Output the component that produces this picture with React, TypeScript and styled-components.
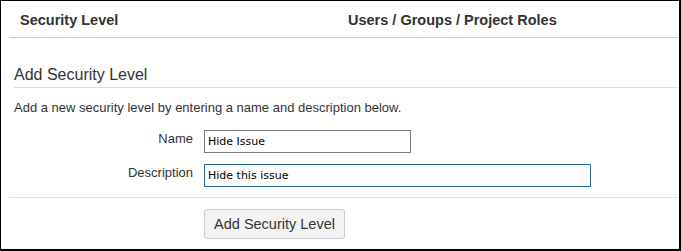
import React from "react";
import styled, { createGlobalStyle } from "styled-components";

const Global = createGlobalStyle`
  html, body { margin: 0; padding: 0; background: #fff; }
  body { font-family: "Liberation Sans", Arial, sans-serif; color: #333; }
  * { box-sizing: border-box; }
`;

const Frame = styled.div`
  width: 681px;
  height: 251px;
  border-left: 1px solid #000;
  border-top: 1px solid #000;
  border-right: 2px solid #000;
  border-bottom: 2px solid #000;
  background: #fff;
  display: flex;
  flex-direction: column;
  overflow: hidden;
`;

const Header = styled.div`
  margin-left: 8px;
  height: 37px;
  border-bottom: 1px solid #cccccc;
  display: grid;
  grid-template-columns: 339px 1fr;
  align-items: center;
`;

const HeaderCell = styled.div<{ $pad: number }>`
  padding-left: ${(p) => p.$pad}px;
  font-size: 14.5px;
  font-weight: bold;
  color: #333;
  padding-top: 2px;
`;

const Heading = styled.h2`
  margin: 0 0 0 13px;
  padding: 27px 0 2px 0;
  font-size: 16px;
  line-height: 20px;
  font-weight: normal;
  color: #333;
  border-bottom: 1px solid #dddddd;
`;

const Intro = styled.p`
  margin: 12px 0 0 13px;
  font-size: 13px;
  line-height: 16px;
  color: #333;
`;

const Form = styled.div`
  margin-top: 14px;
  display: flex;
  flex-direction: column;
  gap: 11px;
`;

const Row = styled.div`
  display: grid;
  grid-template-columns: 192px auto;
  column-gap: 11px;
  align-items: start;
`;

const Label = styled.label`
  text-align: right;
  font-size: 13px;
  line-height: 18px;
  color: #333;
`;

const Input = styled.input<{ $w: number; $focus?: boolean }>`
  width: ${(p) => p.$w}px;
  height: 23px;
  margin: 0;
  padding: 0 3px;
  font-family: "DejaVu Sans", Tahoma, sans-serif;
  font-size: 11px;
  color: #000;
  background: #fff;
  border: 1px solid ${(p) => (p.$focus ? "#2b6c9e" : "#7a7a7a")};
  outline: none;
`;

const Divider = styled.div`
  margin: 10px 0 0 8px;
  height: 1px;
  background: #dddddd;
`;

const Button = styled.button`
  margin: 11px 0 0 203px;
  width: 141px;
  height: 30px;
  padding: 0;
  font-family: "Liberation Sans", Arial, sans-serif;
  font-size: 14.5px;
  color: #333;
  background: #f4f4f4;
  border: 1px solid #cccccc;
  border-radius: 3px;
  align-self: flex-start;
`;

export default function App() {
  return (
    <>
      <Global />
      <Frame>
        <Header>
          <HeaderCell $pad={11}>Security Level</HeaderCell>
          <HeaderCell $pad={0}>Users / Groups / Project Roles</HeaderCell>
        </Header>
        <Heading>Add Security Level</Heading>
        <Intro>Add a new security level by entering a name and description below.</Intro>
        <Form>
          <Row>
            <Label>Name</Label>
            <Input $w={207} defaultValue="Hide Issue" />
          </Row>
          <Row>
            <Label>Description</Label>
            <Input $w={387} $focus defaultValue="Hide this issue" />
          </Row>
        </Form>
        <Divider />
        <Button>Add Security Level</Button>
      </Frame>
    </>
  );
}
